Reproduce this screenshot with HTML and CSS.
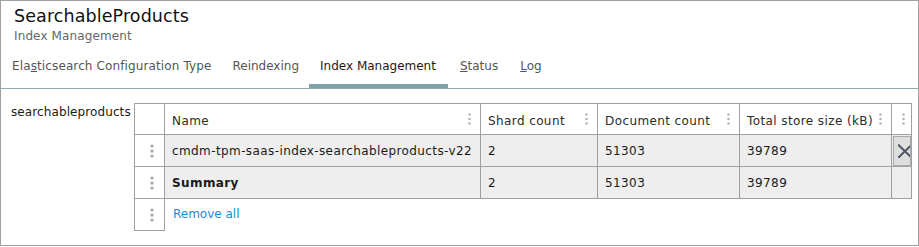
FILE: index.html
```html
<!DOCTYPE html>
<html lang="en">
<head>
  <meta charset="UTF-8" />
  <title>SearchableProducts</title>
  <link rel="stylesheet" href="styles.css">
</head>
<body>
  <div class="frame">
    <header class="page-head">
      <div class="title">SearchableProducts</div>
      <div class="subtitle">Index Management</div>
    </header>

    <nav class="tabs">
      <a class="tab">Ela<u>s</u>ticsearch Configuration Type</a>
      <a class="tab">Reindexing</a>
      <a class="tab active">Index Management</a>
      <a class="tab"><u>S</u>tatus</a>
      <a class="tab"><u>L</u>og</a>
    </nav>

    <main class="content">
      <div class="label">searchableproducts</div>

      <div class="grid">
        <div class="row head">
          <div class="cell handle"></div>
          <div class="cell">
            <span>Name</span>
            <svg class="hdots" viewBox="0 0 3 12"><circle cx="1.5" cy="1.5" r="1.3"/><circle cx="1.5" cy="6" r="1.3"/><circle cx="1.5" cy="10.5" r="1.3"/></svg>
          </div>
          <div class="cell">
            <span>Shard count</span>
            <svg class="hdots" viewBox="0 0 3 12"><circle cx="1.5" cy="1.5" r="1.3"/><circle cx="1.5" cy="6" r="1.3"/><circle cx="1.5" cy="10.5" r="1.3"/></svg>
          </div>
          <div class="cell">
            <span>Document count</span>
            <svg class="hdots" viewBox="0 0 3 12"><circle cx="1.5" cy="1.5" r="1.3"/><circle cx="1.5" cy="6" r="1.3"/><circle cx="1.5" cy="10.5" r="1.3"/></svg>
          </div>
          <div class="cell">
            <span>Total store size (kB)</span>
            <svg class="hdots" viewBox="0 0 3 12"><circle cx="1.5" cy="1.5" r="1.3"/><circle cx="1.5" cy="6" r="1.3"/><circle cx="1.5" cy="10.5" r="1.3"/></svg>
          </div>
          <div class="cell last">
            <svg class="hdots" viewBox="0 0 3 12"><circle cx="1.5" cy="1.5" r="1.3"/><circle cx="1.5" cy="6" r="1.3"/><circle cx="1.5" cy="10.5" r="1.3"/></svg>
          </div>
        </div>

        <div class="row data">
          <div class="cell handle">
            <svg class="rdots" viewBox="0 0 4 14"><circle cx="2" cy="2" r="1.6"/><circle cx="2" cy="7" r="1.6"/><circle cx="2" cy="12" r="1.6"/></svg>
          </div>
          <div class="cell">cmdm-tpm-saas-index-searchableproducts-v22</div>
          <div class="cell">2</div>
          <div class="cell">51303</div>
          <div class="cell">39789</div>
          <div class="cell last">
            <button class="del-btn" title="Remove">
              <svg viewBox="0 0 14 14"><path d="M0 0.5 L14 14 M14 0.5 L0 14"/></svg>
            </button>
          </div>
        </div>

        <div class="row data summary">
          <div class="cell handle">
            <svg class="rdots" viewBox="0 0 4 14"><circle cx="2" cy="2" r="1.6"/><circle cx="2" cy="7" r="1.6"/><circle cx="2" cy="12" r="1.6"/></svg>
          </div>
          <div class="cell">Summary</div>
          <div class="cell">2</div>
          <div class="cell">51303</div>
          <div class="cell">39789</div>
          <div class="cell last"></div>
        </div>

        <div class="row foot">
          <div class="cell handle">
            <svg class="rdots" viewBox="0 0 4 14"><circle cx="2" cy="2" r="1.6"/><circle cx="2" cy="7" r="1.6"/><circle cx="2" cy="12" r="1.6"/></svg>
          </div>
          <a class="remove-all" href="#">Remove all</a>
        </div>
      </div>
    </main>
  </div>
</body>
</html>
```

FILE: styles.css
```css
:root {
  --border: #a0a0a0;
  --text: #1a1a1a;
  --text-muted: #555555;
  --row-bg: #eeeeee;
  --accent: #7ea3aa;
  --link: #1e8ad6;
}
* {
  margin: 0;
  padding: 0;
  box-sizing: border-box;
}
body {
  font-family: 'DejaVu Sans', sans-serif;
  font-size: 12px;
  line-height: 14px;
  color: var(--text);
  background: #ffffff;
}
.frame {
  width: 919px;
  height: 246px;
  border: 1px solid var(--border);
}
.page-head {
  padding: 5px 0 0 13px;
}
.title {
  font-size: 17.5px;
  line-height: 20px;
  letter-spacing: 0.1px;
  color: #111111;
}
.subtitle {
  margin-top: 3px;
  letter-spacing: 0.12px;
  color: #666666;
}
.tabs {
  display: flex;
  margin-top: 16px;
  border-bottom: 1px solid #8ca9ae;
}
.tab {
  padding: 0 11px 11px;
  border-bottom: 4px solid transparent;
  color: var(--text-muted);
  text-decoration: none;
  white-space: nowrap;
  cursor: pointer;
}
.tab:first-child {
  letter-spacing: 0.12px;
}
.tab:nth-child(2) {
  padding-left: 10px;
  padding-right: 10px;
}
.tab:nth-child(3) {
  padding-right: 12px;
}
.tab:nth-child(4) {
  padding-left: 12px;
}
.tab.active {
  color: var(--text);
  border-bottom-color: var(--accent);
}
.content {
  display: flex;
  padding: 14px 0 0 10px;
}
.label {
  width: 123px;
  padding-top: 2px;
  letter-spacing: 0.1px;
}
.grid {
  letter-spacing: 0.4px;
}
.row {
  display: grid;
  grid-template-columns: 31px 316px 117px 142px 152px 20px;
  height: 32px;
}
.cell {
  display: flex;
  align-items: center;
  padding-left: 7px;
  border-right: 1px solid var(--border);
  border-bottom: 1px solid var(--border);
  white-space: nowrap;
}
.cell.handle {
  border-left: 1px solid var(--border);
  padding-left: 15px;
  background: #ffffff;
}
.head .cell {
  border-top: 1px solid var(--border);
  justify-content: space-between;
  padding-right: 9px;
  color: #2b2b2b;
}
.head .cell span {
  padding-top: 3px;
}
.head .cell.last {
  justify-content: flex-end;
  padding: 0 6px 0 0;
}
.hdots {
  width: 3px;
  height: 12px;
  fill: #b4b4b4;
  flex-shrink: 0;
}
.rdots {
  width: 4px;
  height: 14px;
  fill: #a6a6a6;
}
.data .cell {
  background: var(--row-bg);
}
.data .cell.handle {
  background: #ffffff;
}
.summary .cell {
  font-weight: bold;
}
.summary .cell:nth-child(n+3) {
  font-weight: normal;
}
.data .cell.last {
  padding: 0;
  align-items: flex-start;
}
.del-btn {
  width: 18px;
  height: 30px;
  margin: 1px 0 0 1px;
  border: 1px solid #a9a9a9;
  background: #dedede;
  overflow: hidden;
  display: flex;
  align-items: center;
  padding-left: 4px;
  cursor: pointer;
}
.del-btn svg {
  width: 14px;
  height: 14px;
  flex-shrink: 0;
  stroke: #4b5663;
  stroke-width: 2;
  fill: none;
}
.foot {
  grid-template-columns: 31px auto;
}
.remove-all {
  display: flex;
  align-items: center;
  padding: 0 0 2px 8px;
  letter-spacing: 0;
  color: var(--link);
  text-decoration: none;
}
```
